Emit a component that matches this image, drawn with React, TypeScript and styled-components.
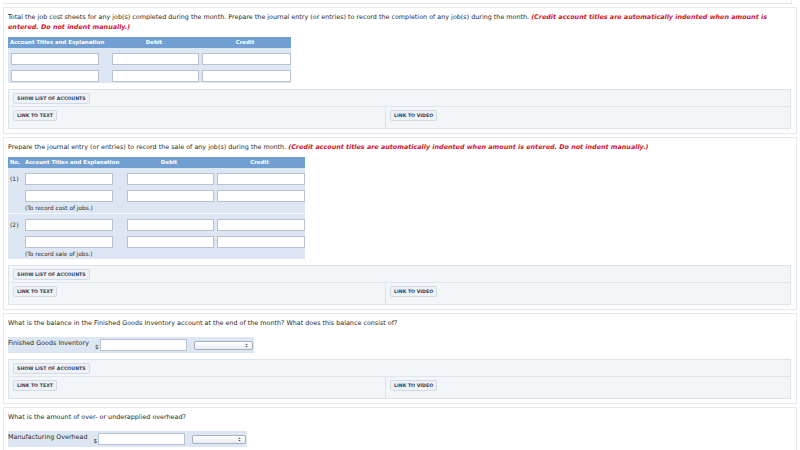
import styled, { createGlobalStyle } from 'styled-components'

const GlobalStyle = createGlobalStyle`
  html, body {
    margin: 0;
    padding: 0;
    background: #ffffff;
    font-family: "DejaVu Sans", Verdana, sans-serif;
    font-size: 6px;
    line-height: 1.2;
    color: #2b2b2b;
  }
`

const Page = styled.div`
  width: 800px;
  height: 450px;
  overflow: hidden;
  padding: 0 3px;
  box-sizing: border-box;
`

const PrevEdge = styled.div`
  height: 3px;
  margin-right: 5px;
  border-bottom: 1px solid #e3e8ee;
  border-right: 1px solid #e3e8ee;
`

const Section = styled.div`
  margin-top: 3px;
  border: 1px solid #e6eaf0;
  padding: 4px 5px 4px 4px;
  background: #ffffff;
`

const Question = styled.p`
  margin: 0;
  font-size: 6.4px;
  line-height: 10px;
  max-width: 770px;
  color: #2b2b2b;
`

const Warn = styled.em`
  color: #d0142c;
  font-weight: bold;
`

const Table = styled.div<{ $cols: string; $width: number }>`
  display: grid;
  grid-template-columns: ${(p) => p.$cols};
  width: ${(p) => p.$width}px;
  margin-top: 5px;
`

const HeadCell = styled.div<{ $center?: boolean }>`
  background: #729fd2;
  color: #ffffff;
  font-weight: bold;
  font-size: 5.4px;
  height: 11px;
  line-height: 11px;
  padding-left: ${(p) => (p.$center ? '0' : '2px')};
  text-align: ${(p) => (p.$center ? 'center' : 'left')};
  white-space: nowrap;
`

const Group = styled.div<{ $last?: boolean }>`
  grid-column: 1 / -1;
  background: #dce7f3;
  padding: 5px 0 1px;
  border-bottom: ${(p) => (p.$last ? 'none' : '1px solid #f4f8fc')};
`

const RowSet = styled.div<{ $cols: string }>`
  display: grid;
  grid-template-columns: ${(p) => p.$cols};
  row-gap: 5px;
  align-items: center;
`

const Cell = styled.div`
  padding-left: 3px;
  display: flex;
  align-items: center;
`

const NoCell = styled.div`
  font-size: 6px;
  padding-left: 2px;
`

const TextInput = styled.div<{ $w?: number }>`
  width: ${(p) => p.$w ?? 86}px;
  height: 10px;
  border: 1px solid #b9c3cf;
  background: #ffffff;
`

const Note = styled.div`
  grid-column: 2 / -1;
  font-size: 5.8px;
  line-height: 8px;
  padding-left: 3px;
  margin-top: -3px;
`

const Toolbar = styled.div`
  margin-top: 6px;
  border: 1px solid #dde3ea;
  background: #f3f6f9;
`

const ToolRow = styled.div`
  display: flex;
  padding: 3px 4px 2px;
  border-bottom: 1px solid #dfe5ec;
`

const LinkRow = styled.div`
  display: grid;
  grid-template-columns: 377px 1fr;
`

const LinkCell = styled.div<{ $first?: boolean }>`
  display: flex;
  align-items: flex-start;
  height: 21px;
  padding: 3px 4px 0;
  box-sizing: border-box;
  border-right: ${(p) => (p.$first ? '1px solid #dfe5ec' : 'none')};
`

const SmallButton = styled.span`
  display: inline-block;
  font-size: 4.7px;
  font-weight: bold;
  color: #34465f;
  background: #eef2f6;
  border: 1px solid #d3dae3;
  border-radius: 2px;
  padding: 2px 3px;
  line-height: 5px;
`

const AmountRow = styled.div`
  display: flex;
  width: fit-content;
  align-items: center;
  background: #dce7f3;
  margin-top: 9px;
  padding: 0 1px 0 0;
  height: 16px;
`

const AmountLabel = styled.span`
  font-size: 6.4px;
  margin-top: -3px;
`

const Dollar = styled.span`
  font-size: 5.8px;
  margin: 5px 1px 0 6px;
`

const SelectBox = styled.div<{ $w: number }>`
  width: ${(p) => p.$w}px;
  height: 9px;
  margin-left: 7px;
  border: 1px solid #a9b1bc;
  border-radius: 2px;
  background: linear-gradient(#ffffff, #e9ecf0);
  display: flex;
  align-items: center;
  justify-content: flex-end;
  padding-right: 4px;
  box-sizing: border-box;
`

function Arrows() {
  return (
    <svg width="3" height="5" viewBox="0 0 3 5">
      <path d="M0.3 2 L1.5 0.6 L2.7 2 Z M0.3 3 L1.5 4.4 L2.7 3 Z" fill="#555" />
    </svg>
  )
}

function Tools() {
  return (
    <Toolbar>
      <ToolRow>
        <SmallButton>SHOW LIST OF ACCOUNTS</SmallButton>
      </ToolRow>
      <LinkRow>
        <LinkCell $first>
          <SmallButton>LINK TO TEXT</SmallButton>
        </LinkCell>
        <LinkCell>
          <SmallButton>LINK TO VIDEO</SmallButton>
        </LinkCell>
      </LinkRow>
    </Toolbar>
  )
}

const WARNING =
  '(Credit account titles are automatically indented when amount is entered. Do not indent manually.)'

const cols1 = '101px 90px 92px'
const cols2 = '14px 102px 90px 91px'

function Amount({ label, selectW }: { label: string; selectW: number }) {
  return (
    <AmountRow>
      <AmountLabel>{label}</AmountLabel>
      <Dollar>$</Dollar>
      <TextInput $w={85} />
      <SelectBox $w={selectW}>
        <Arrows />
      </SelectBox>
    </AmountRow>
  )
}

export default function App() {
  return (
    <Page>
      <GlobalStyle />
      <PrevEdge />

      <Section>
        <Question>
          Total the job cost sheets for any job(s) completed during the month. Prepare the journal
          entry (or entries) to record the completion of any job(s) during the month.{' '}
          <Warn>{WARNING}</Warn>
        </Question>
        <Table $cols={cols1} $width={283}>
          <HeadCell>Account Titles and Explanation</HeadCell>
          <HeadCell $center>Debit</HeadCell>
          <HeadCell $center>Credit</HeadCell>
          <Group $last>
            <RowSet $cols={cols1}>
              <Cell><TextInput /></Cell>
              <Cell><TextInput $w={87} /></Cell>
              <Cell><TextInput $w={87} /></Cell>
              <Cell><TextInput /></Cell>
              <Cell><TextInput $w={87} /></Cell>
              <Cell><TextInput $w={87} /></Cell>
            </RowSet>
          </Group>
        </Table>
        <Tools />
      </Section>

      <Section>
        <Question>
          Prepare the journal entry (or entries) to record the sale of any job(s) during the month.{' '}
          <Warn>{WARNING}</Warn>
        </Question>
        <Table $cols={cols2} $width={297}>
          <HeadCell>No.</HeadCell>
          <HeadCell style={{ paddingLeft: 3 }}>Account Titles and Explanation</HeadCell>
          <HeadCell $center>Debit</HeadCell>
          <HeadCell $center>Credit</HeadCell>
          {[
            { no: '(1)', note: '(To record cost of jobs.)' },
            { no: '(2)', note: '(To record sale of jobs.)' },
          ].map((g, i) => (
            <Group key={g.no} $last={i === 1}>
              <RowSet $cols={cols2}>
                <NoCell>{g.no}</NoCell>
                <Cell><TextInput /></Cell>
                <Cell><TextInput /></Cell>
                <Cell><TextInput /></Cell>
                <span />
                <Cell><TextInput /></Cell>
                <Cell><TextInput /></Cell>
                <Cell><TextInput /></Cell>
                <Note>{g.note}</Note>
              </RowSet>
            </Group>
          ))}
        </Table>
        <Tools />
      </Section>

      <Section>
        <Question>
          What is the balance in the Finished Goods Inventory account at the end of the month? What
          does this balance consist of?
        </Question>
        <Amount label="Finished Goods Inventory" selectW={59} />
        <Tools />
      </Section>

      <Section>
        <Question>What is the amount of over- or underapplied overhead?</Question>
        <Amount label="Manufacturing Overhead" selectW={54} />
      </Section>
    </Page>
  )
}
